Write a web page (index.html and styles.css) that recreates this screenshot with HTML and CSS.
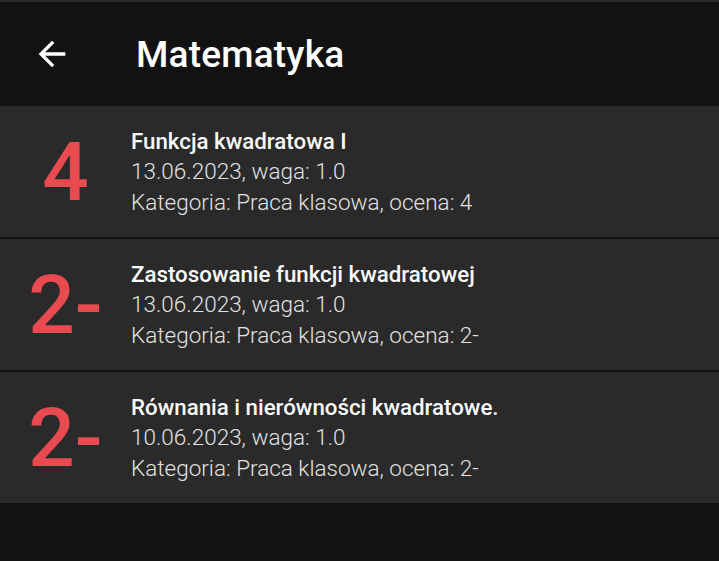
FILE: index.html
```html
<!DOCTYPE html>
<html lang="pl">
<head>
<meta charset="utf-8">
<link rel="stylesheet" href="styles.css">
</head>
<body>
<div class="app">
  <header class="topbar">
    <button class="back" aria-label="Wstecz">
      <svg viewBox="0 0 24 24"><path d="M20 11H7.83l5.59-5.59L12 4l-8 8 8 8 1.41-1.41L7.83 13H20v-2z" fill="#fff"/></svg>
    </button>
    <h1 class="title">Matematyka</h1>
  </header>
  <ul class="list">
    <li class="item">
      <div class="grade">4</div>
      <div class="info">
        <div class="name">Funkcja kwadratowa I</div>
        <div class="meta">13.06.2023, waga: 1.0</div>
        <div class="meta">Kategoria: Praca klasowa, ocena: 4</div>
      </div>
    </li>
    <li class="item">
      <div class="grade">2-</div>
      <div class="info">
        <div class="name">Zastosowanie funkcji kwadratowej</div>
        <div class="meta">13.06.2023, waga: 1.0</div>
        <div class="meta">Kategoria: Praca klasowa, ocena: 2-</div>
      </div>
    </li>
    <li class="item">
      <div class="grade">2-</div>
      <div class="info">
        <div class="name">Równania i nierówności kwadratowe.</div>
        <div class="meta">10.06.2023, waga: 1.0</div>
        <div class="meta">Kategoria: Praca klasowa, ocena: 2-</div>
      </div>
    </li>
  </ul>
</div>
</body>
</html>
```
FILE: styles.css
```css
* { box-sizing: border-box; }
html, body {
  margin: 0;
  padding: 0;
  background: #121212;
  font-family: Roboto, "Noto Sans", sans-serif;
  color: #fff;
}
.app {
  width: 719px;
  height: 561px;
  border-top: 2px solid #2c2c2c;
  background: #121212;
}
.topbar {
  height: 104px;
  display: flex;
  align-items: center;
  background: #121212;
}
.back {
  background: none;
  border: none;
  padding: 0;
  margin-left: 32px;
  width: 40px;
  height: 40px;
  display: flex;
  align-items: center;
  justify-content: center;
}
.back svg { width: 40px; height: 40px; display: block; }
.title {
  margin: 0 0 0 64px;
  font-size: 37px;
  font-weight: 500;
  letter-spacing: 0.2px;
  color: #fff;
}
.list {
  list-style: none;
  margin: 0;
  padding: 0;
  display: flex;
  flex-direction: column;
  gap: 2px;
}
.item {
  height: 131px;
  background: #2a2a2a;
  display: flex;
  align-items: center;
}
.grade {
  width: 131px;
  text-align: center;
  font-size: 82px;
  font-weight: 500;
  color: #e84a4f;
  line-height: 1;
}
.info {
  display: flex;
  flex-direction: column;
  line-height: 30.5px;
}
.name {
  font-size: 22.3px;
  font-weight: 500;
  color: #fafafa;
}
.meta {
  font-size: 22.5px;
  font-weight: 300;
  color: #e2e2e2;
}
```
